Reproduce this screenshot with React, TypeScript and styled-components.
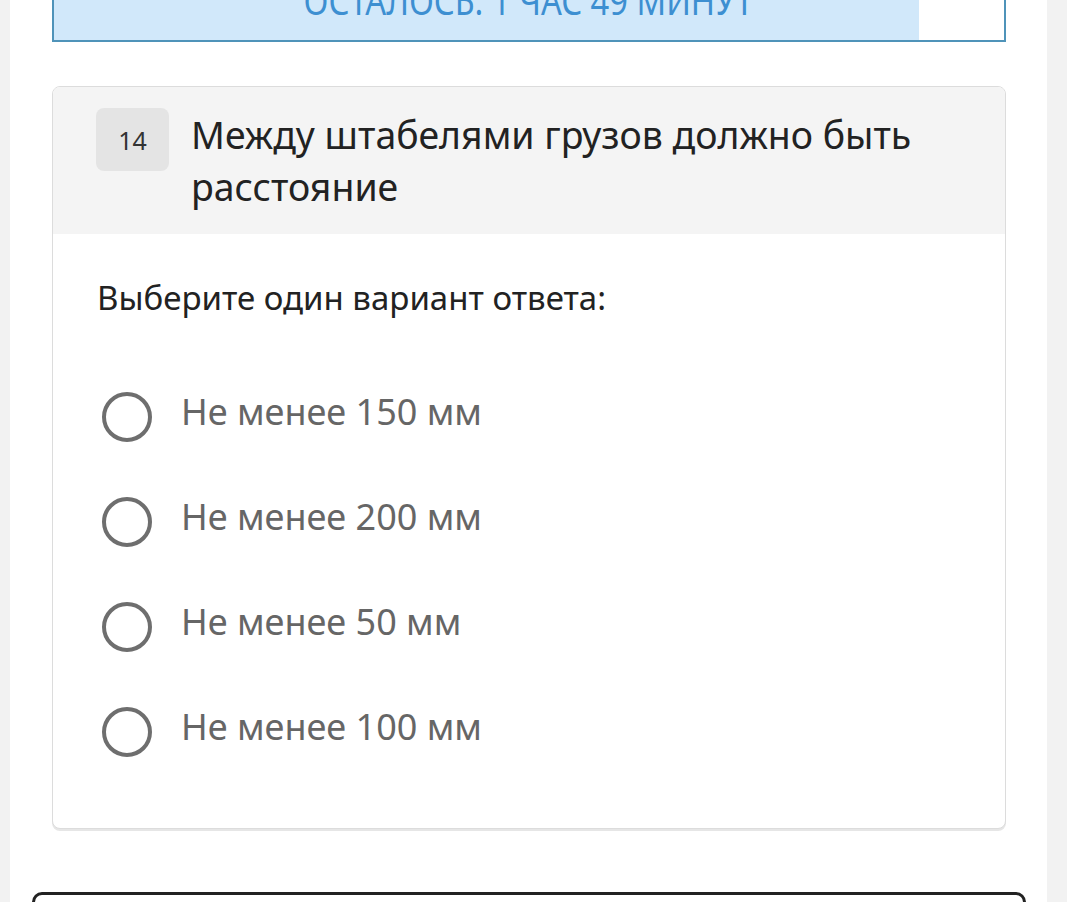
import React from 'react'
import styled, { createGlobalStyle } from 'styled-components'

const GlobalStyle = createGlobalStyle`
body {
    margin: 0;
    background: #f2f2f2;
    font-family: 'Noto Sans', 'Open Sans', sans-serif;
    overflow: hidden;
}
`

const options = ['Не менее 150 мм', 'Не менее 200 мм', 'Не менее 50 мм', 'Не менее 100 мм']

const progress = 91

export default function App () {
    return <>
        <GlobalStyle />
        <Page>
            <Timer>
                <TimerFill style={{ width: `${progress}%` }} />
                <TimerText>ОСТАЛОСЬ: 1 ЧАС 49 МИНУТ</TimerText>
            </Timer>
            <Card>
                <Header>
                    <Badge>14</Badge>
                    <Title>Между штабелями грузов должно быть расстояние</Title>
                </Header>
                <Body>
                    <Prompt>Выберите один вариант ответа:</Prompt>
                    <OptionList>
                        {options.map(o => <Option key={o}>
                            <Radio />
                            <OptionText>{o}</OptionText>
                        </Option>)}
                    </OptionList>
                </Body>
            </Card>
            <NextButton />
        </Page>
    </>
}

const Page = styled.div`
display: flex;
flex-direction: column;
width: 1037px;
margin-left: 10px;
height: 902px;
overflow: hidden;
background: #fff;
padding: 0 41px 0 42px;
box-sizing: border-box;
`

const Timer = styled.div`
flex: none;
position: relative;
height: 84px;
margin-top: -42px;
border: 2px solid #4f93b9;
box-sizing: border-box;
display: flex;
align-items: center;
justify-content: center;
background: #fff;
overflow: hidden;
`

const TimerFill = styled.div`
position: absolute;
left: 0;
top: 0;
bottom: 0;
background: #d1e8fa;
`

const TimerText = styled.span`
position: relative;
margin-top: 0px;
font-size: 38px;
color: #3d8fd1;
transform: scaleX(0.86);
white-space: nowrap;
`

const Card = styled.div`
flex: none;
margin-top: 44px;
border: 1px solid #dcdcdc;
border-radius: 8px;
box-shadow: 0 2px 0 #e6e6e6;
overflow: hidden;
background: #fff;
`

const Header = styled.div`
display: flex;
align-items: flex-start;
gap: 22px;
background: #f4f4f4;
padding: 21px 43px 8px 43px;
min-height: 147px;
box-sizing: border-box;
`

const Badge = styled.div`
flex: none;
width: 73px;
height: 63px;
border-radius: 8px;
background: #e4e4e4;
display: flex;
align-items: center;
justify-content: center;
font-size: 25px;
color: #333;
`

const Title = styled.div`
font-size: 37.4px;
line-height: 52px;
color: #222;
margin-top: 1px;
`

const Body = styled.div`
padding: 44px 44px 44px 44px;
`

const Prompt = styled.div`
font-size: 33px;
line-height: 40px;
color: #222;
`

const OptionList = styled.div`
margin-top: 46px;
display: flex;
flex-direction: column;
padding-left: 5px;
`

const Option = styled.div`
height: 105px;
display: flex;
align-items: center;
gap: 29px;
`

const Radio = styled.div`
flex: none;
width: 50px;
height: 50px;
border: 4px solid #6e6e6e;
border-radius: 50%;
box-sizing: border-box;
`

const OptionText = styled.div`
font-size: 36px;
color: #666;
margin-top: -10px;
`

const NextButton = styled.div`
flex: none;
margin: 63px -20px 0 -20px;
height: 60px;
border: 3px solid #222;
border-radius: 10px;
`
